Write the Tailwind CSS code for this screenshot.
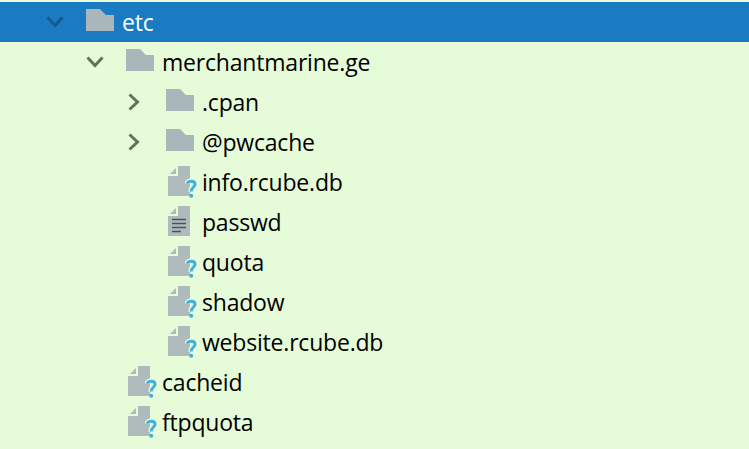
<!DOCTYPE html>
<html>
<head>
<meta charset="utf-8">
<script src="https://cdn.jsdelivr.net/npm/@tailwindcss/browser@4"></script>
</head>
<body class="m-0 overflow-hidden">
<svg width="0" height="0" class="absolute">
  <defs>
    <symbol id="folder" viewBox="0 0 28 22"><path d="M0 0H14L20 6H28V22H0Z" fill="#a9b7ba"/></symbol>
    <symbol id="unknown" viewBox="0 0 30 32">
      <path d="M10 0H22V30H0V10H10Z" fill="#aebabb"/>
      <path d="M2 8L8 2V8Z" fill="#aebabb"/>
      <path d="M19.5 17.5C20 14.5 27 14 27 18.2C27 21.3 23.2 21.3 23.2 25.5" fill="none" stroke="#e6fbd8" stroke-width="6"/>
      <path d="M19.5 17.5C20 14.5 27 14 27 18.2C27 21.3 23.2 21.3 23.2 25.5" fill="none" stroke="#41aedb" stroke-width="3"/>
      <circle cx="23.2" cy="29.8" r="2" fill="#41aedb"/>
    </symbol>
    <symbol id="text" viewBox="0 0 30 32">
      <path d="M10 0H22V30H0V10H10Z" fill="#aebabb"/>
      <path d="M2 8L8 2V8Z" fill="#aebabb"/>
      <path d="M4 13.5H18M4 17.5H18M4 21.5H18M4 25.5H13" stroke="#4a5554" stroke-width="1.6"/>
    </symbol>
  </defs>
</svg>
<div class="w-[749px] h-[449px] overflow-hidden bg-[#e6fbd8] pt-[2px] text-[23px] text-black font-['Open_Sans','Noto_Sans',sans-serif] tracking-[-0.2px]">
  <div class="h-10 flex items-center bg-[#1a7bc3] text-white pl-[46px]">
    <svg class="w-[18px] h-[12px] shrink-0" viewBox="0 0 18 12"><path d="M1.5 1.5L9 9.5L16.5 1.5" fill="none" stroke="#17588f" stroke-width="3"/></svg>
    <svg class="w-7 h-[22px] ml-[22px] mt-[-4px] shrink-0"><use href="#folder"/></svg>
    <span class="ml-2">etc</span>
  </div>
  <div class="h-10 flex items-center pl-[86px]">
    <svg class="w-[18px] h-[12px] shrink-0" viewBox="0 0 18 12"><path d="M1.5 1.5L9 9.5L16.5 1.5" fill="none" stroke="#62735c" stroke-width="3"/></svg>
    <svg class="w-7 h-[22px] ml-[22px] mt-[-4px] shrink-0"><use href="#folder"/></svg>
    <span class="ml-2">merchantmarine.ge</span>
  </div>
  <div class="h-10 flex items-center pl-[128px]">
    <svg class="w-3 h-[18px] shrink-0" viewBox="0 0 12 18"><path d="M1.5 1.5L9.5 9L1.5 16.5" fill="none" stroke="#62735c" stroke-width="3"/></svg>
    <svg class="w-7 h-[22px] ml-[26px] mt-[-4px] shrink-0"><use href="#folder"/></svg>
    <span class="ml-2">.cpan</span>
  </div>
  <div class="h-10 flex items-center pl-[128px]">
    <svg class="w-3 h-[18px] shrink-0" viewBox="0 0 12 18"><path d="M1.5 1.5L9.5 9L1.5 16.5" fill="none" stroke="#62735c" stroke-width="3"/></svg>
    <svg class="w-7 h-[22px] ml-[26px] mt-[-4px] shrink-0"><use href="#folder"/></svg>
    <span class="ml-2">@pwcache</span>
  </div>
  <div class="h-10 flex items-center pl-[168px]">
    <svg class="w-[30px] h-8 shrink-0"><use href="#unknown"/></svg>
    <span class="ml-1">info.rcube.db</span>
  </div>
  <div class="h-10 flex items-center pl-[168px]">
    <svg class="w-[30px] h-8 shrink-0"><use href="#text"/></svg>
    <span class="ml-1">passwd</span>
  </div>
  <div class="h-10 flex items-center pl-[168px]">
    <svg class="w-[30px] h-8 shrink-0"><use href="#unknown"/></svg>
    <span class="ml-1">quota</span>
  </div>
  <div class="h-10 flex items-center pl-[168px]">
    <svg class="w-[30px] h-8 shrink-0"><use href="#unknown"/></svg>
    <span class="ml-1">shadow</span>
  </div>
  <div class="h-10 flex items-center pl-[168px]">
    <svg class="w-[30px] h-8 shrink-0"><use href="#unknown"/></svg>
    <span class="ml-1">website.rcube.db</span>
  </div>
  <div class="h-10 flex items-center pl-[128px]">
    <svg class="w-[30px] h-8 shrink-0"><use href="#unknown"/></svg>
    <span class="ml-1">cacheid</span>
  </div>
  <div class="h-10 flex items-center pl-[128px]">
    <svg class="w-[30px] h-8 shrink-0"><use href="#unknown"/></svg>
    <span class="ml-1">ftpquota</span>
  </div>
</div>
</body>
</html>
